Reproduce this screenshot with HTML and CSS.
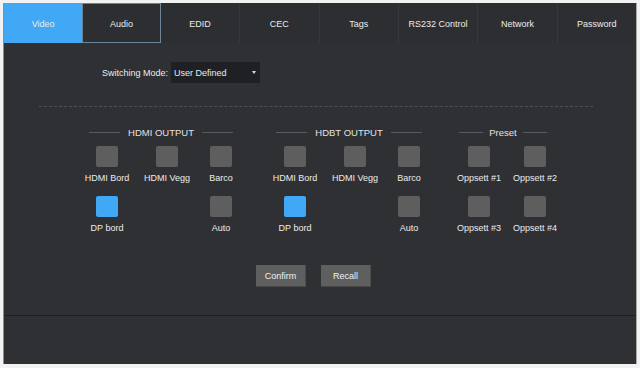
FILE: index.html
```html
<!DOCTYPE html>
<html lang="en">

<head>
    <meta charset="UTF-8">
    <meta name="viewport" content="width=device-width, initial-scale=1.0">
    <title>Video</title>
    <link rel="stylesheet" href="styles.css">
</head>

<body>
    <div class="panel">
        <div class="tabs">
            <div class="tab active">Video</div>
            <div class="tab focus">Audio</div>
            <div class="tab">EDID</div>
            <div class="tab">CEC</div>
            <div class="tab">Tags</div>
            <div class="tab">RS232 Control</div>
            <div class="tab">Network</div>
            <div class="tab last">Password</div>
        </div>

        <div class="content">
            <div class="mode">
                <label>Switching Mode:</label>
                <div class="select">
                    <span>User Defined</span>
                    <span class="arrow"></span>
                </div>
            </div>

            <div class="dashed"></div>

            <div class="groups">
                <div class="group out">
                    <div class="head"><span class="line"></span><span>HDMI OUTPUT</span><span class="line"></span></div>
                    <div class="grid">
                        <div class="item"><div class="sq"></div><div class="lbl">HDMI Bord</div></div>
                        <div class="item"><div class="sq"></div><div class="lbl">HDMI Vegg</div></div>
                        <div class="item"><div class="sq"></div><div class="lbl">Barco</div></div>
                        <div class="item"><div class="sq on"></div><div class="lbl">DP bord</div></div>
                        <div class="item"></div>
                        <div class="item"><div class="sq"></div><div class="lbl">Auto</div></div>
                    </div>
                </div>

                <div class="group out">
                    <div class="head"><span class="line"></span><span>HDBT OUTPUT</span><span class="line"></span></div>
                    <div class="grid">
                        <div class="item"><div class="sq"></div><div class="lbl">HDMI Bord</div></div>
                        <div class="item"><div class="sq"></div><div class="lbl">HDMI Vegg</div></div>
                        <div class="item"><div class="sq"></div><div class="lbl">Barco</div></div>
                        <div class="item"><div class="sq on"></div><div class="lbl">DP bord</div></div>
                        <div class="item"></div>
                        <div class="item"><div class="sq"></div><div class="lbl">Auto</div></div>
                    </div>
                </div>

                <div class="group preset">
                    <div class="head"><span class="line"></span><span>Preset</span><span class="line"></span></div>
                    <div class="grid">
                        <div class="item"><div class="sq"></div><div class="lbl">Oppsett #1</div></div>
                        <div class="item"><div class="sq"></div><div class="lbl">Oppsett #2</div></div>
                        <div class="item"><div class="sq"></div><div class="lbl">Oppsett #3</div></div>
                        <div class="item"><div class="sq"></div><div class="lbl">Oppsett #4</div></div>
                    </div>
                </div>
            </div>

            <div class="buttons">
                <button class="btn">Confirm</button>
                <button class="btn recall">Recall</button>
            </div>
        </div>

        <div class="footer"></div>
    </div>
</body>

</html>
```

FILE: styles.css
```css
body {
    margin: 0;
    background: #f2f2f2;
    font-family: "Liberation Sans", Arial, sans-serif;
    color: #ececec;
}

.panel {
    margin: 3px 0 0 3px;
    width: 632px;
    height: 361px;
    background: #2f3033;
    border-left: 1px solid #8c8c8c;
    border-right: 1px solid #a8a8a8;
    display: flex;
    flex-direction: column;
}

.tabs {
    display: flex;
    height: 40px;
    background: #2d2e31;
}

.tab {
    flex: 1;
    font-size: 9px;
    line-height: 42px;
    text-align: center;
    border-right: 1px solid #37383b;
}

.tab.last {
    border-right: none;
}

.tab.active {
    background: #40a8f4;
    border-right: none;
}

.tab.focus {
    box-shadow: inset 0 0 0 1px #6c8596;
    border-right: none;
}

.content {
    flex: 1;
}

.mode {
    display: flex;
    align-items: center;
    margin-top: 19px;
    padding-left: 98px;
    font-size: 9px;
}

.mode label {
    margin-right: 3px;
}

.select {
    width: 89px;
    height: 21px;
    background: #1f2023;
    display: flex;
    align-items: center;
    justify-content: space-between;
    padding: 0 4px 0 3px;
    box-sizing: border-box;
}

.arrow {
    border-left: 2px solid transparent;
    border-right: 2px solid transparent;
    border-top: 3px solid #dcdcdc;
}

.dashed {
    margin: 23px 43px 0 35px;
    border-top: 1px dashed #4e4f52;
}

.groups {
    display: flex;
    margin-top: 18px;
    padding-left: 76px;
}

.group.out {
    width: 162px;
    margin-right: 26px;
}

.group.out + .group.out {
    margin-right: 20px;
}

.group.preset {
    width: 112px;
}

.head {
    display: flex;
    align-items: center;
    justify-content: center;
    gap: 8px;
    height: 13px;
    padding-top: 1px;
    box-sizing: border-box;
    font-size: 9.5px;
    color: #e2e2e2;
    margin-bottom: 8px;
}

.head .line {
    width: 31px;
    border-top: 1px solid #5a5b5e;
}

.preset .head {
    gap: 6px;
    padding-right: 6px;
}

.preset .head .line {
    width: 24px;
}

.grid {
    display: grid;
    grid-template-columns: 54px 66px 42px;
    row-gap: 12px;
}

.preset .grid {
    grid-template-columns: 58px 54px;
}

.item {
    display: flex;
    flex-direction: column;
    align-items: center;
    height: 38px;
}

.sq {
    width: 22px;
    height: 22px;
    border-radius: 2px;
    background: #5e5e5e;
}

.sq.on {
    background: #40a8f4;
}

.lbl {
    margin-top: 5px;
    font-size: 9px;
    line-height: 12px;
    white-space: nowrap;
}

.buttons {
    display: flex;
    justify-content: center;
    gap: 15px;
    margin-top: 31px;
    padding-right: 13px;
}

.btn {
    width: 50px;
    height: 22px;
    background: #5f5f5f;
    color: #f0f0f0;
    border: none;
    border-bottom: 1px solid #484848;
    border-right: 1px solid #4c4c4c;
    font-family: "Liberation Sans", Arial, sans-serif;
    font-size: 9px;
    padding: 1px 0 0;
}

.footer {
    height: 48px;
    border-top: 1px solid #1f2022;
}
```
